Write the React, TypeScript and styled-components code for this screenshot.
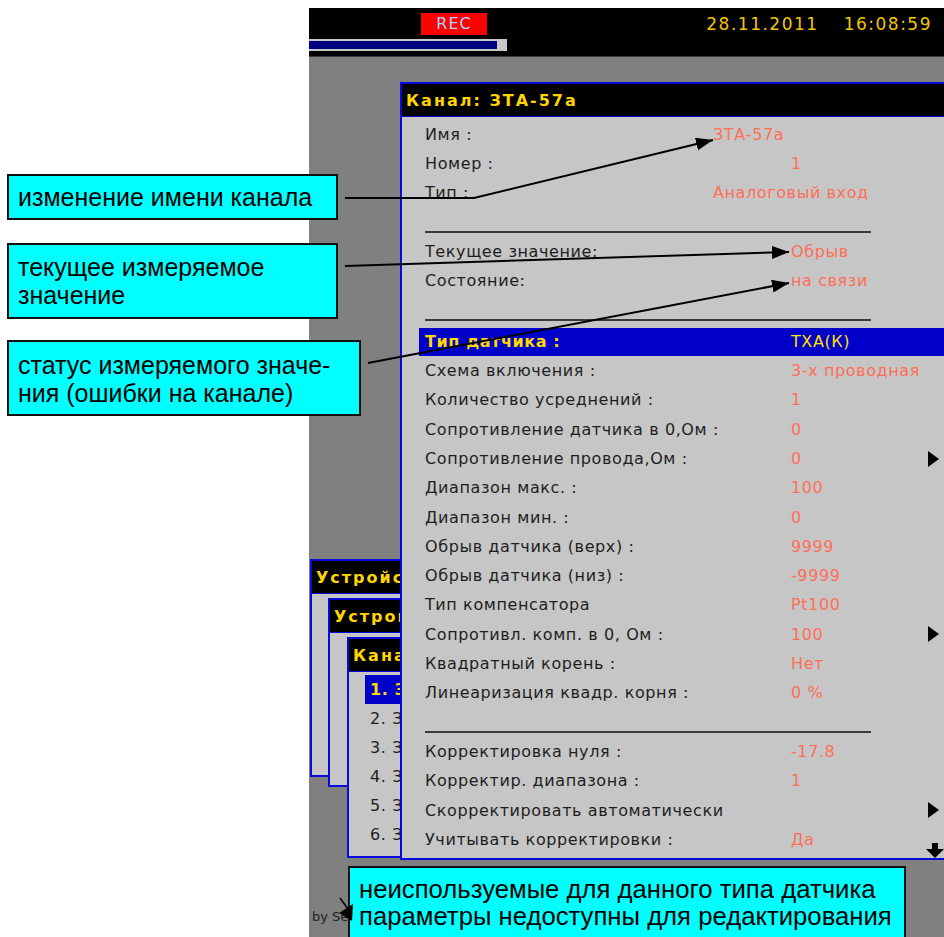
import React from 'react';
import styled, { createGlobalStyle } from 'styled-components';

const Global = createGlobalStyle`
  html, body { margin: 0; padding: 0; background: #ffffff; }
  body { width: 944px; height: 937px; overflow: hidden; }
`;

const Page = styled.div`
  position: relative;
  width: 944px;
  height: 937px;
  overflow: hidden;
  background: #ffffff;
  font-family: "DejaVu Sans", Verdana, sans-serif;
`;

const Screen = styled.div`
  margin-left: 309px;
  padding-top: 8px;
  height: 100%;
  box-sizing: border-box;
  display: flex;
  flex-direction: column;
`;

const TopBar = styled.div`
  flex: none;
  height: 49px;
  box-sizing: border-box;
  background: #000;
  border-bottom: 1px solid #3a3a3a;
  display: flex;
  flex-direction: column;
`;

const TopRow = styled.div`
  height: 31px;
  display: flex;
  align-items: center;
  padding: 0 12px 0 112px;
`;

const RecBadge = styled.div`
  width: 66px;
  height: 22px;
  background: #ff0000;
  color: #a8d4ff;
  font-size: 16px;
  letter-spacing: 1px;
  display: flex;
  align-items: center;
  justify-content: center;
`;

const Clock = styled.div`
  margin-left: auto;
  display: flex;
  gap: 25px;
  color: #f2c400;
  font-size: 17px;
  letter-spacing: 1.5px;
`;

const Progress = styled.div`
  width: 198px;
  height: 12px;
  box-sizing: border-box;
  background: #c8c8c8;
  padding: 2px 10px 2px 0;
`;

const ProgressFill = styled.div`
  height: 100%;
  background: #000080;
`;

const Desktop = styled.div`
  flex: 1;
  position: relative;
  background: #808080;
  overflow: hidden;
  display: flex;
  flex-direction: column;
  justify-content: flex-end;
  padding: 0 0 13px 3px;
`;

const Footer = styled.div`
  font-size: 13px;
  color: #222;
`;

const Window = styled.div<{ $l: number; $t: number; $w: number; $h: number; $z: number }>`
  position: absolute;
  left: ${p => p.$l}px;
  top: ${p => p.$t}px;
  width: ${p => p.$w}px;
  height: ${p => p.$h}px;
  z-index: ${p => p.$z};
  box-sizing: border-box;
  border: 2px solid #0a0ad8;
  background: #c6c6c6;
  display: flex;
  flex-direction: column;
  overflow: hidden;
`;

const WinHeader = styled.div`
  flex: none;
  height: 33px;
  box-sizing: border-box;
  background: #000;
  border-bottom: 1px solid #0a0ad8;
  color: #ffd400;
  font-weight: bold;
  font-size: 16px;
  letter-spacing: 2px;
  padding-left: 4px;
  display: flex;
  align-items: center;
  white-space: nowrap;
`;

const DialogBody = styled.div`
  padding-top: 2.4px;
  display: flex;
  flex-direction: column;
`;

const Row = styled.div<{ $vx?: number; $active?: boolean; $h?: number }>`
  display: grid;
  grid-template-columns: ${p => p.$vx ?? 366}px 1fr 11px;
  align-items: center;
  height: ${p => p.$h ?? 29.3}px;
  padding: 0 19px 0 ${p => (p.$active ? 6 : 23)}px;
  margin-left: ${p => (p.$active ? 17 : 0)}px;
  background: ${p => (p.$active ? '#0000c8' : 'transparent')};
  font-size: 16px;
  letter-spacing: 0.6px;
  white-space: nowrap;
`;

const Label = styled.span<{ $active?: boolean }>`
  color: ${p => (p.$active ? '#ffd800' : '#1e1e1e')};
  font-weight: ${p => (p.$active ? 'bold' : 'normal')};
`;

const Value = styled.span<{ $active?: boolean }>`
  color: ${p => (p.$active ? '#ffe000' : '#ff6e58')};
`;

const Divider = styled.div<{ $mt: number; $mb: number }>`
  margin: ${p => p.$mt}px 0 ${p => p.$mb}px 23px;
  width: 446px;
  border-top: 2px solid #3a3a3a;
`;

const ArrowCell = styled.span<{ $end?: boolean }>`
  display: flex;
  align-self: ${p => (p.$end ? 'end' : 'center')};
  margin-bottom: ${p => (p.$end ? -4 : 0)}px;
  margin-left: ${p => (p.$end ? -2 : 0)}px;
  & > svg { flex: none; }
`;

const List = styled.div`
  padding: 3px 0 0 16px;
  display: flex;
  flex-direction: column;
`;

const ListItem = styled.div<{ $active?: boolean }>`
  height: 29px;
  display: flex;
  align-items: center;
  padding-left: 5px;
  font-size: 16px;
  letter-spacing: 0.6px;
  white-space: nowrap;
  background: ${p => (p.$active ? '#0000c8' : 'transparent')};
  color: ${p => (p.$active ? '#ffd800' : '#1e1e1e')};
  font-weight: ${p => (p.$active ? 'bold' : 'normal')};
`;

const Callout = styled.div<{ $x: number; $y: number; $w: number; $h: number; $pt: number; $fs?: number; $lh?: number }>`
  position: absolute;
  left: ${p => p.$x}px;
  top: ${p => p.$y}px;
  width: ${p => p.$w}px;
  height: ${p => p.$h}px;
  box-sizing: border-box;
  background: #00ffff;
  border: 2px solid #111;
  padding: ${p => p.$pt}px 0 0 9px;
  font-family: "Liberation Sans", Arial, sans-serif;
  font-size: ${p => p.$fs ?? 25}px;
  line-height: ${p => p.$lh ?? 28}px;
  color: #000;
  z-index: 10;
  white-space: nowrap;
`;

const Connectors = styled.svg`
  position: absolute;
  left: 0;
  top: 0;
  z-index: 20;
  pointer-events: none;
`;

const RightArrow = () => (
  <svg width="11" height="16" viewBox="0 0 11 16">
    <polygon points="0,0 11,8 0,16" fill="#000" />
  </svg>
);

const DownArrow = () => (
  <svg width="18" height="15" viewBox="0 0 18 15">
    <rect x="6" y="0" width="6" height="7" fill="#000" />
    <polygon points="0,6 18,6 9,15" fill="#000" />
  </svg>
);

type Item = { label: string; value?: string; vx?: number; arrow?: boolean; down?: boolean };

const top1: Item[] = [
  { label: 'Имя :', value: 'ЗТА-57а', vx: 288 },
  { label: 'Номер :', value: '1' },
  { label: 'Тип :', value: 'Аналоговый вход', vx: 288 },
];
const top2: Item[] = [
  { label: 'Текущее значение:', value: 'Обрыв' },
  { label: 'Состояние:', value: 'на связи' },
];
const params: Item[] = [
  { label: 'Схема включения :', value: '3-х проводная' },
  { label: 'Количество усреднений :', value: '1' },
  { label: 'Сопротивление датчика в 0,Ом :', value: '0' },
  { label: 'Сопротивление провода,Ом :', value: '0', arrow: true },
  { label: 'Диапазон макс. :', value: '100' },
  { label: 'Диапазон мин. :', value: '0' },
  { label: 'Обрыв датчика (верх) :', value: '9999' },
  { label: 'Обрыв датчика (низ) :', value: '-9999' },
  { label: 'Тип компенсатора', value: 'Pt100' },
  { label: 'Сопротивл. комп. в 0, Ом :', value: '100', arrow: true },
  { label: 'Квадратный корень :', value: 'Нет' },
  { label: 'Линеаризация квадр. корня :', value: '0 %' },
];
const corr: Item[] = [
  { label: 'Корректировка нуля :', value: '-17.8' },
  { label: 'Корректир. диапазона :', value: '1' },
  { label: 'Скорректировать автоматически', arrow: true },
  { label: 'Учитывать корректировки :', value: 'Да', down: true },
];

const renderRows = (items: Item[]) =>
  items.map(it => (
    <Row key={it.label} $vx={it.vx}>
      <Label>{it.label}</Label>
      <Value>{it.value ?? ''}</Value>
      {it.arrow ? (
        <ArrowCell><RightArrow /></ArrowCell>
      ) : it.down ? (
        <ArrowCell $end><DownArrow /></ArrowCell>
      ) : (
        <span />
      )}
    </Row>
  ));

const channels = ['ЗТА-57а', 'ЗТА-57б', 'ЗТА-58а', 'ЗТА-58б', 'ЗТА-59а', 'ЗТА-59б'];

export default function App() {
  return (
    <Page>
      <Global />
      <Screen>
        <TopBar>
          <TopRow>
            <RecBadge>REC</RecBadge>
            <Clock>
              <span>28.11.2011</span>
              <span>16:08:59</span>
            </Clock>
          </TopRow>
          <Progress>
            <ProgressFill />
          </Progress>
        </TopBar>
        <Desktop>
          <Window $l={1} $t={502} $w={93} $h={218} $z={1}>
            <WinHeader>Устройства</WinHeader>
          </Window>
          <Window $l={19} $t={541} $w={75} $h={189} $z={2}>
            <WinHeader>Устройство 1</WinHeader>
          </Window>
          <Window $l={38} $t={580} $w={56} $h={221} $z={3}>
            <WinHeader>Каналы</WinHeader>
            <List>
              {channels.map((c, i) => (
                <ListItem key={c} $active={i === 0}>{`${i + 1}. ${c}`}</ListItem>
              ))}
            </List>
          </Window>
          <Window $l={91} $t={25} $w={560} $h={778} $z={5}>
            <WinHeader>Канал: ЗТА-57а</WinHeader>
            <DialogBody>
              {renderRows(top1)}
              <Divider $mt={24} $mb={3.3} />
              {renderRows(top2)}
              <Divider $mt={24} $mb={6.8} />
              <Row $active $h={28}>
                <Label $active>Тип датчика :</Label>
                <Value $active>ТХА(К)</Value>
                <span />
              </Row>
              {renderRows(params)}
              <Divider $mt={23.4} $mb={3.9} />
              {renderRows(corr)}
            </DialogBody>
          </Window>
          <Footer>by Sensor</Footer>
        </Desktop>
      </Screen>

      <Callout $x={7} $y={174} $w={331} $h={46} $pt={7}>изменение имени канала</Callout>
      <Callout $x={7} $y={243} $w={331} $h={76} $pt={8}>
        текущее измеряемое
        <br />
        значение
      </Callout>
      <Callout $x={7} $y={340} $w={354} $h={76} $pt={9}>
        статус измеряемого значе-
        <br />
        ния (ошибки на канале)
      </Callout>
      <Callout $x={348} $y={866} $w={558} $h={80} $pt={8} $fs={25.7} $lh={27}>
        неиспользуемые для данного типа датчика
        <br />
        параметры недоступны для редактирования
      </Callout>

      <Connectors width="944" height="937" viewBox="0 0 944 937">
        <defs>
          <marker id="head" markerUnits="userSpaceOnUse" markerWidth="18" markerHeight="14" refX="17" refY="6.5" orient="auto">
            <path d="M0,0 L17,6.5 L0,13 Z" fill="#000" />
          </marker>
        </defs>
        <polyline points="345,198 474,198 713,140" fill="none" stroke="#000" strokeWidth="2" markerEnd="url(#head)" />
        <line x1="345" y1="266" x2="789" y2="252" stroke="#000" strokeWidth="2" markerEnd="url(#head)" />
        <line x1="368" y1="363" x2="789" y2="283" stroke="#000" strokeWidth="2" markerEnd="url(#head)" />
        <line x1="340" y1="898" x2="348" y2="909" stroke="#000" strokeWidth="1.5" />
        <polygon points="339,913 353,904 352,921" fill="#000" />
      </Connectors>
    </Page>
  );
}
